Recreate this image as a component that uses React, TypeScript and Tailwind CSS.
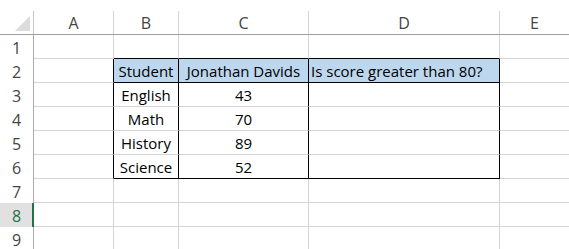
import React from 'react';

const cols = ['A', 'B', 'C', 'D', 'E'];
const widths = ['w-[80px]', 'w-[65px]', 'w-[130px]', 'w-[191px]', 'w-[70px]'];

type Cell = { text?: string; align?: 'left' | 'center'; extra?: string };

// border classes per row (row 1..9) per column A..E
function cellBorder(r: number, c: number): string {
  let right = 'border-r-[#d4d4d4]';
  let bottom = 'border-b-[#d4d4d4]';
  const inTable = r >= 2 && r <= 6 && c >= 1 && c <= 3;
  if (r >= 2 && r <= 6 && (c === 0 || inTable)) right = 'border-r-black';
  if (r === 1 && c >= 1 && c <= 3) bottom = 'border-b-black';
  if (inTable && (r === 2 || r === 6)) bottom = 'border-b-black';
  return `${right} ${bottom}`;
}

const data: Record<number, Cell[]> = {
  2: [{}, { text: 'Student' }, { text: 'Jonathan Davids' }, { text: 'Is score greater than 80?', align: 'left' }, {}],
  3: [{}, { text: 'English' }, { text: '43' }, {}, {}],
  4: [{}, { text: 'Math' }, { text: '70' }, {}, {}],
  5: [{}, { text: 'History' }, { text: '89' }, {}, {}],
  6: [{}, { text: 'Science' }, { text: '52' }, {}, {}],
};

export default function App() {
  const rows = [1, 2, 3, 4, 5, 6, 7, 8, 9];
  return (
    <div
      className="w-[569px] h-[249px] overflow-hidden bg-white pt-[11px] text-[15px] text-black"
      style={{ fontFamily: '"Open Sans", "Liberation Sans", sans-serif' }}
    >
      {/* column header */}
      <div className="flex h-[24px] border-b border-b-[#9e9e9e]">
        <div className="relative w-[34px] shrink-0 border-r border-r-[#c6c6c6]">
          <svg className="absolute right-[3px] bottom-[3px]" width="15" height="15" viewBox="0 0 15 15">
            <polygon points="15,0 15,15 0,15" fill="#dcdcdc" />
          </svg>
        </div>
        {cols.map((c, i) => (
          <div
            key={c}
            className={`${widths[i]} shrink-0 flex items-center justify-center border-r border-r-[#d4d4d4] text-[#444] text-[16px] pt-[1px]`}
          >
            {c}
          </div>
        ))}
      </div>

      {rows.map((r) => {
        const sel = r === 8;
        return (
          <div key={r} className="flex h-[24px]">
            <div
              className={`w-[34px] shrink-0 flex items-center justify-center text-[16px] pt-[1px] ${
                sel
                  ? 'bg-[#e1e1e1] text-[#217346] border-r-2 border-r-[#217346] pl-[1px]'
                  : 'text-[#444] border-r border-r-[#ababab]'
              }`}
            >
              {r}
            </div>
            {cols.map((c, i) => {
              const cell = data[r]?.[i] ?? {};
              const header = r === 2 && i >= 1 && i <= 3;
              return (
                <div
                  key={c}
                  className={`${widths[i]} shrink-0 flex items-end pb-[1px] border-r border-b ${cellBorder(r, i)} ${
                    header ? 'bg-[#bdd7ee]' : ''
                  } ${cell.align === 'left' ? 'justify-start pl-[2px]' : 'justify-center'} leading-[20px]`}
                >
                  {cell.text}
                </div>
              );
            })}
          </div>
        );
      })}
    </div>
  );
}
